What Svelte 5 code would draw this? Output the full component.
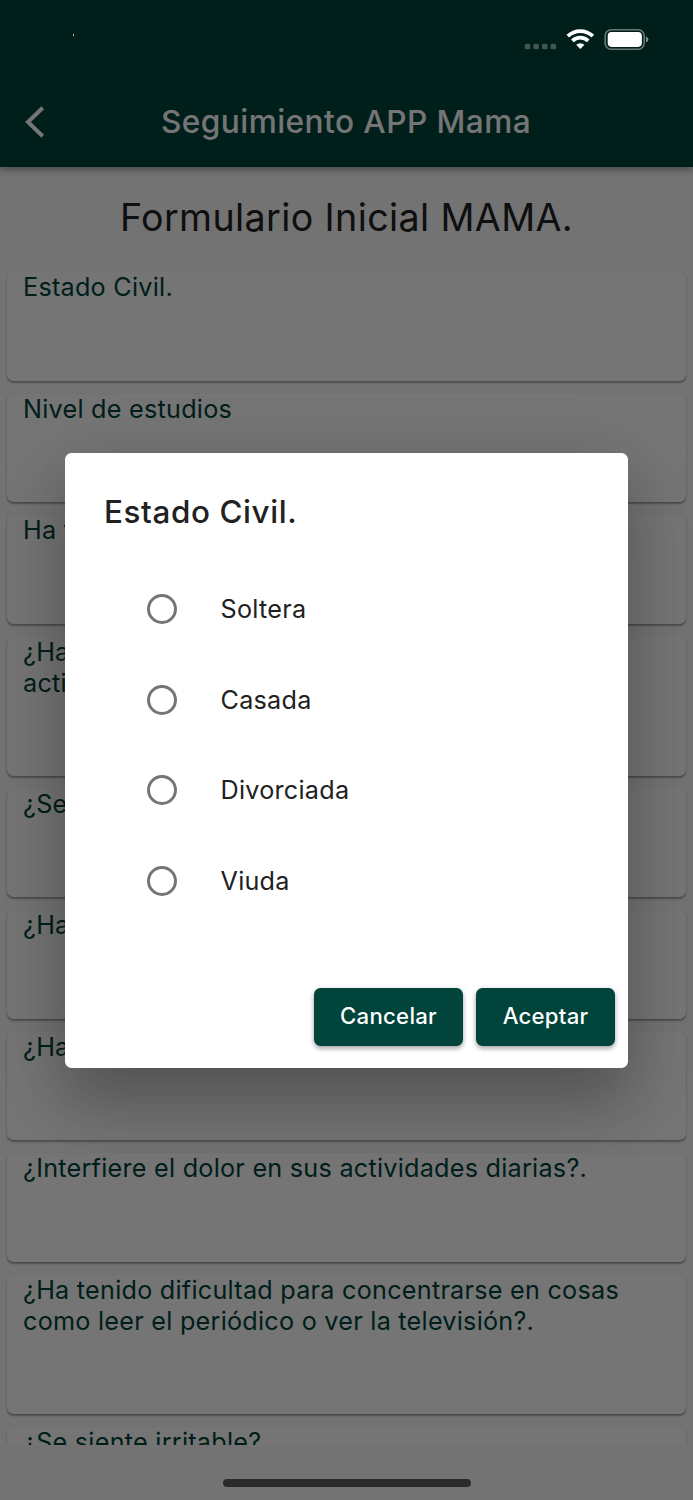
<script lang="ts">
    const questions = [
        { lines: ["Estado Civil."] },
        { lines: ["Nivel de estudios"] },
        { lines: ["Ha t"] },
        { lines: ["¿Ha", "acti"] },
        { lines: ["¿Se"] },
        { lines: ["¿Ha"] },
        { lines: ["¿Ha"] },
        { lines: ["¿Interfiere el dolor en sus actividades diarias?."] },
        {
            lines: [
                "¿Ha tenido dificultad para concentrarse en cosas",
                "como leer el periódico o ver la televisión?.",
            ],
        },
        { lines: ["¿Se siente irritable?"] },
    ];

    const options = ["Soltera", "Casada", "Divorciada", "Viuda"];
    let selected = $state("");
</script>

<div class="phone">
    <header class="app-bar">
        <svg class="back" viewBox="0 0 22 34" width="22" height="34">
            <path d="M18.7 2.8 4 17l14.7 14.2" fill="none" stroke="#fff" stroke-width="4" />
        </svg>
        <h1>Seguimiento APP Mama</h1>
    </header>

    <main>
        <h2>Formulario Inicial MAMA.</h2>
        <div class="cards">
            {#each questions as question}
                <section class="card" class:tall={question.lines.length > 1}>
                    {#each question.lines as line}
                        <div>{line}</div>
                    {/each}
                </section>
            {/each}
        </div>
    </main>

    <footer><div class="home-bar"></div></footer>

    <div class="barrier">
        <div class="dialog" role="dialog" aria-modal="true" aria-label="Estado Civil.">
            <h3>Estado Civil.</h3>
            <div class="options">
                {#each options as option}
                    <label>
                        <input type="radio" name="civil" value={option} bind:group={selected} />
                        <span>{option}</span>
                    </label>
                {/each}
            </div>
            <div class="actions">
                <button class="cancel">Cancelar</button>
                <button class="accept">Aceptar</button>
            </div>
        </div>
    </div>

    <!-- Status bar -->
    <div class="status">
        <span class="speck"></span>
        <svg width="126" height="24" viewBox="0 0 126 24">
            <g fill="#fff" fill-opacity=".25">
                <rect x="0.8" y="15.8" width="5.5" height="5.5" rx="1.6" />
                <rect x="9.4" y="15.8" width="5.5" height="5.5" rx="1.6" />
                <rect x="18" y="15.8" width="5.5" height="5.5" rx="1.6" />
                <rect x="26.6" y="15.8" width="5.5" height="5.5" rx="1.6" />
            </g>
            <g fill="none" stroke="#fff" stroke-width="3.8">
                <path d="M43.8 8.1a18 18 0 0 1 25 0" />
                <path d="M48.4 12.8a11.4 11.4 0 0 1 15.8 0" />
            </g>
            <path d="M52.2 16.8a6 6 0 0 1 8.2 0L56.3 21z" fill="#fff" />
            <rect x="81.2" y="1.7" width="39" height="19.6" rx="6" fill="none" stroke="#fff" stroke-opacity=".4" stroke-width="1.6" />
            <rect x="83.7" y="4.1" width="34.2" height="14.8" rx="3.8" fill="#fff" />
            <path d="M122 8.6q2.4.8 2.4 2.9T122 14.4z" fill="#fff" fill-opacity=".5" />
        </svg>
    </div>
</div>

<style>
    :global(body) {
        margin: 0;
    }

    .phone {
        position: relative;
        display: flex;
        flex-direction: column;
        width: 693px;
        height: 1500px;
        overflow: hidden;
        background: #fafafa;
        font-family: Inter, "Liberation Sans", sans-serif;
        color: #212121;
    }

    h1,
    h2,
    h3 {
        margin: 0;
    }

    .app-bar {
        display: grid;
        grid-template-columns: 70px 1fr 70px;
        align-items: center;
        flex: none;
        box-sizing: border-box;
        height: 167px;
        padding-top: 77px;
        background: #00443c;
        color: #fff;
        box-shadow:
            0 3px 6px rgba(0, 0, 0, 0.25),
            0 1px 12px rgba(0, 0, 0, 0.15);
        z-index: 1;
    }

    .back {
        margin-left: 24px;
    }

    h1 {
        font-size: 31.6px;
        font-weight: 500;
        line-height: 40px;
        letter-spacing: 0.45px;
        text-align: center;
        text-indent: -1px;
        white-space: nowrap;
    }

    main {
        flex: 1;
        min-height: 0;
        overflow: hidden;
    }

    h2 {
        margin: 27px 0 30.2px;
        font-size: 37.6px;
        font-weight: 400;
        line-height: 48px;
        letter-spacing: 0.4px;
        text-align: center;
        white-space: nowrap;
    }

    .cards {
        display: flex;
        flex-direction: column;
        gap: 13px;
        padding: 0 7px 0 6.5px;
    }

    .card {
        flex: none;
        box-sizing: border-box;
        height: 108.5px;
        padding: 0 16.5px;
        border-radius: 6.5px;
        background: #fff;
        box-shadow:
            0 1.6px 2px rgba(0, 0, 0, 0.28),
            0 1px 2px rgba(0, 0, 0, 0.14);
        color: #00443c;
        font-size: 25.2px;
        line-height: 31px;
        letter-spacing: 0.25px;
        white-space: nowrap;
    }

    .card.tall {
        height: 139.2px;
    }

    footer {
        display: flex;
        justify-content: center;
        flex: none;
        height: 55px;
    }

    .home-bar {
        width: 248px;
        height: 8px;
        margin-top: 34px;
        border-radius: 4px;
        background: #5c5c5c;
    }

    .barrier {
        position: absolute;
        inset: 0;
        z-index: 2;
        display: grid;
        place-items: center;
        padding-top: 21px;
        background: rgba(0, 0, 0, 0.54);
    }

    .dialog {
        display: flex;
        flex-direction: column;
        box-sizing: border-box;
        width: 563px;
        height: 615px;
        padding: 39px 13px 22.5px 39px;
        border-radius: 6.5px;
        background: #fff;
        box-shadow:
            0 39px 61px 0 rgba(0, 0, 0, 0.21),
            0 15px 74px 6px rgba(0, 0, 0, 0.1);
    }

    h3 {
        font-size: 31.4px;
        font-weight: 500;
        line-height: 40px;
        letter-spacing: 0.6px;
    }

    .options {
        flex: 1;
        padding: 31.6px 0 0 43px;
    }

    label {
        display: flex;
        align-items: center;
        gap: 43.5px;
        height: 90.7px;
        font-size: 25.2px;
        letter-spacing: 0.25px;
    }

    input {
        appearance: none;
        box-sizing: border-box;
        width: 30px;
        height: 30px;
        margin: 0;
        border: 3.2px solid #757575;
        border-radius: 50%;
    }

    input:checked {
        border-color: #00443c;
        background: radial-gradient(#00443c 50%, transparent 55%);
    }

    .actions {
        display: flex;
        justify-content: flex-end;
        gap: 13px;
    }

    button {
        height: 58px;
        padding: 0 0 2px;
        border: 0;
        border-radius: 6.5px;
        background: #00443c;
        box-shadow:
            0 3px 4px rgba(0, 0, 0, 0.24),
            0 1px 6px rgba(0, 0, 0, 0.16);
        color: #fff;
        font: 500 22.2px Inter, "Liberation Sans", sans-serif;
        letter-spacing: 0.25px;
    }

    .cancel {
        width: 149px;
    }

    .accept {
        width: 139px;
    }

    .status {
        position: absolute;
        top: 28px;
        left: 0;
        right: 0;
        z-index: 3;
        display: flex;
        justify-content: space-between;
        padding: 0 43px 0 73px;
    }

    .speck {
        width: 1px;
        height: 2px;
        margin-top: 6px;
        background: #aebbb8;
    }
</style>
